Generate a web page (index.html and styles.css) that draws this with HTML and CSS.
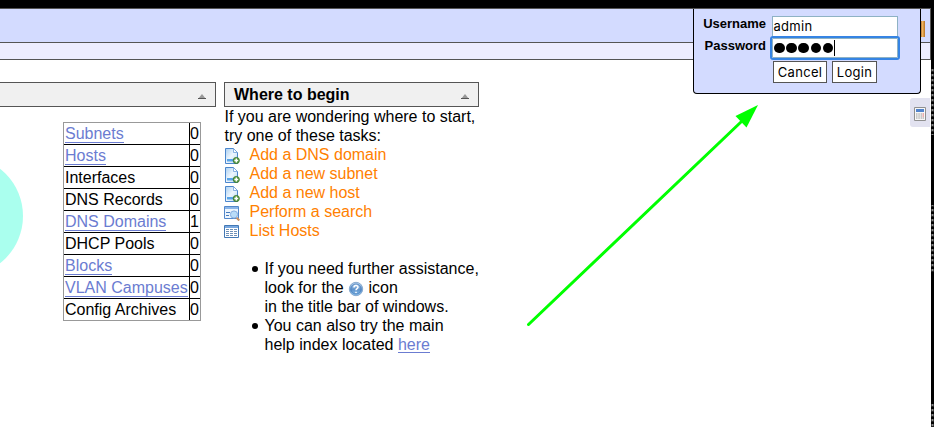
FILE: index.html
```
<!DOCTYPE html>
<html lang="en">
<head>
<meta charset="utf-8">
<title>Desktop</title>
<link rel="stylesheet" href="styles.css">
</head>
<body>
<svg class="defs" width="0" height="0">
  <defs>
    <linearGradient id="sheet" x1="0" y1="0" x2="1" y2="1"><stop offset="0" stop-color="#a9cff2"/><stop offset=".5" stop-color="#eef6fd"/><stop offset="1" stop-color="#b5d6f6"/></linearGradient>
    <linearGradient id="ball" x1="0" y1="0" x2="0" y2="1"><stop offset="0" stop-color="#bcd6f0"/><stop offset=".55" stop-color="#5f93cc"/><stop offset="1" stop-color="#8ec4ef"/></linearGradient>
    <symbol id="page-add" viewBox="0 0 16 16">
      <path d="M1.500 .5h8l4 4v11h-12z" fill="url(#sheet)" stroke="#4b86cc"/>
      <path d="M9.500 .5v4h4z" fill="#fff" stroke="#6ea0da" stroke-width=".8"/>
      <path d="M3 11h7v2.500H3z" fill="#58a4e8"/>
      <circle cx="12.300" cy="12.500" r="3.100" fill="#5d9c45" stroke="#37752b" stroke-width=".8"/>
      <path d="M12.300 10.600v3.800M10.400 12.500h3.800" stroke="#fff" stroke-width="1.400"/>
    </symbol>
    <symbol id="search" viewBox="0 0 16 16">
      <path d="M.5 1.500h14v12H.5z" fill="#edf5fd" stroke="#5388cb"/>
      <path d="M1 2h13v2H1z" fill="#8ab5e8"/>
      <path d="M2 7.500h4M2 10.500h3" stroke="#457bbd" stroke-width="1.200"/>
      <path d="m12.300 12.500 3 3" stroke="#c78e61" stroke-width="2"/>
      <circle cx="10" cy="9.500" r="3.600" fill="#b9dcf8" stroke="#87aee0"/>
    </symbol>
    <symbol id="list" viewBox="0 0 16 16">
      <path d="M.5 1.500h14v12H.5z" fill="#fff" stroke="#4278b5"/>
      <path d="M1 2h13v2H1z" fill="#79a8df"/>
      <path d="M2 5.500h11M2 7.500h11M2 9.500h11M2 11.500h11" stroke="#6d90b8" stroke-dasharray="3 1 3 1"/>
    </symbol>
    <symbol id="help" viewBox="0 0 16 16">
      <circle cx="8" cy="8" r="6.700" fill="url(#ball)" stroke="#8aabd0"/>
      <circle cx="8" cy="8" r="5" fill="none" stroke="#4f82bd" stroke-width=".8"/>
      <path d="M6 6.500c0-2.600 4-2.500 4-.2C10 7.800 8 7.500 8 9.300M8 10.700v1.400" fill="none" stroke="#fff" stroke-width="1.500"/>
    </symbol>
    <symbol id="collapse" viewBox="0 0 8 6">
      <path d="M0 5 4 0l4 5z" fill="#999"/><path d="M0 4.500h8" stroke="#555"/>
    </symbol>
    <pattern id="weave" width="3" height="5" patternUnits="userSpaceOnUse">
      <path d="M0 1h3v2H0z" fill="#444"/><path d="M1 1h1v2H1z" fill="#888"/><path d="M0 3h3v1H0z" fill="#222"/>
    </pattern>
  </defs>
</svg>
<div class="desktop">
  <div class="topbar"><span class="door"></span></div>
  <div class="taskbar"></div>
  <main class="windows">
    <section class="summary">
      <h2 class="title"><svg class="tri"><use href="#collapse"/></svg></h2>
      <div class="summary-body">
        <div class="chart"></div>
        <table class="counts">
          <tr><td><a>Subnets</a></td><td>0</td></tr>
          <tr><td><a>Hosts</a></td><td>0</td></tr>
          <tr><td>Interfaces</td><td>0</td></tr>
          <tr><td>DNS Records</td><td>0</td></tr>
          <tr><td><a>DNS Domains</a></td><td>1</td></tr>
          <tr><td>DHCP Pools</td><td>0</td></tr>
          <tr><td><a>Blocks</a></td><td>0</td></tr>
          <tr><td><a>VLAN Campuses</a></td><td>0</td></tr>
          <tr><td>Config Archives</td><td>0</td></tr>
        </table>
      </div>
    </section>
    <section class="begin">
      <h2 class="title">Where to begin<svg class="tri"><use href="#collapse"/></svg></h2>
      <div class="begin-body">
        <p>If you are wondering where to start,<br>try one of these tasks:</p>
        <div class="task"><svg><use href="#page-add"/></svg>Add a DNS domain</div>
        <div class="task"><svg><use href="#page-add"/></svg>Add a new subnet</div>
        <div class="task"><svg><use href="#page-add"/></svg>Add a new host</div>
        <div class="task"><svg><use href="#search"/></svg>Perform a search</div>
        <div class="task"><svg><use href="#list"/></svg>List Hosts</div>
        <ul>
          <li><span class="dot"></span><div>If you need further assistance,<br>look for the <svg class="help"><use href="#help"/></svg> icon<br>in the title bar of windows.</div></li>
          <li><span class="dot"></span><div>You can also try the main<br>help index located <a>here</a></div></li>
        </ul>
      </div>
    </section>
  </main>
</div>
<svg class="edge" width="3" height="359"><path d="M0 0h3v67H0zM0 137h3v68H0zM0 335h3v24H0z" fill="url(#weave)"/></svg>
<form class="login">
  <label>Username</label><div class="field">admin</div>
  <label>Password</label><div class="field focus"><i></i><i></i><i></i><i></i><i></i><b></b></div>
  <div class="buttons"><span class="btn">Cancel</span><span class="btn">Login</span></div>
</form>
<div class="calc"><svg width="12" height="14" viewBox="0 0 12 14"><path d="M.5 .5h11v13H.5z" fill="#f7f7f7" stroke="#909090"/><path d="M2 2h8v3H2z" fill="#5283cb"/><path d="M2 7h6M2 9h6M2 11h6" stroke="#999" stroke-dasharray="1.500 .8"/><path d="M8.500 7H10M8.500 9H10" stroke="#d66"/><path d="M8.500 11H10" stroke="#999"/></svg></div>
<svg class="arrow" width="234" height="224" viewBox="0 0 234 224"><path d="M3.500 219.500 216 17" stroke="#0f0" stroke-width="3" stroke-linecap="round"/><path d="m233 0-22.500 11 11 11.500z" fill="#0f0"/></svg>
</body>
</html>
```
FILE: styles.css
```
* { box-sizing: border-box; }
body { margin: 0; width: 934px; height: 427px; overflow: hidden; position: relative; background: #000; font: 16px/19px "Liberation Sans", Arial, sans-serif; color: #000; padding-top: 8px; }
.defs { position: absolute; }
.desktop { width: 931px; height: 419px; background: #fff; }
.topbar { height: 35px; background: #d3dbff; border: solid #555; border-width: 1px 1px 1px 0; display: flex; justify-content: flex-end; padding: 12px 5px 0 0; }
.door { width: 5px; height: 16px; background: linear-gradient(90deg, #94501a, #efb45e 50%, #b77225); }
.taskbar { height: 17px; background: #ededff; border: solid #555; border-width: 0 1px 1px 0; }
.windows { display: flex; gap: 8px; padding-top: 22px; }
.summary { width: 216px; }
.begin { width: 255px; }
.title { margin: 0; height: 25px; font-size: 16px; line-height: 23px; border: 1px solid #555; background: #f0f0f0; padding: 0 9px; display: flex; justify-content: space-between; }
.summary .title { border-left: 0; justify-content: flex-end; }
.tri { width: 8px; height: 6px; margin-top: 11px; }
.summary-body { display: flex; padding-top: 15px; }
.chart { width: 63px; height: 198px; overflow: hidden; display: flex; align-items: center; }
.chart::before { content: ""; flex: none; width: 120px; height: 120px; margin: -11px 0 0 -97px; border-radius: 50%; background: #afe; }
.counts { border-collapse: separate; border-spacing: 0; border: 1px solid #999; width: 138px; height: 199px; line-height: 19px; }
.counts td { padding: 1px 0 1px 1px; height: 22px; border-bottom: 1px solid #000; white-space: nowrap; }
.counts td:first-child { width: 125px; }
.counts td + td { border-left: 1px solid #000; padding-left: 0; width: 11px; }
.counts tr:last-child td { border-bottom: 0; height: 21px; }
a { color: #6b7cd1; border-bottom: 1px solid #6b7cd1; }
.counts a { display: inline-block; line-height: 17px; }
.begin-body { padding-left: .5px; }
p { margin: 0; white-space: nowrap; }
.task { display: flex; height: 19px; color: #ff8000; }
.task svg { width: 16px; height: 16px; margin: 3px 9.500px 0 -.5px; }
.begin a { display: inline-block; height: 18px; line-height: 19px; vertical-align: top; }
ul { margin: 19px 0 0; padding-left: 27px; white-space: nowrap; list-style: none; }
li { height: 57px; display: flex; }
li + li { height: 38px; }
.dot { width: 6px; height: 6px; border-radius: 50%; background: #000; margin: 7px 7px 0 0; }
.help { width: 16px; height: 16px; vertical-align: -4px; margin: -6px 0 0; }
.edge { position: absolute; left: 931px; top: 68px; }
.login { position: absolute; left: 693px; top: 9px; width: 228px; height: 85px; background: #d3dbff; border: 1px solid #000; border-top: 0; border-radius: 0 0 4px 4px; display: grid; grid-template-columns: 72px 128px; grid-template-rows: 21px 21px auto; column-gap: 5px; padding-top: 7px; }
.login label { text-align: right; font: bold 13px/16px "Liberation Sans", sans-serif; }
.login label:nth-of-type(2) { padding-top: 1px; }
.field { margin-left: 1px; width: 126px; height: 21px; border: 1px solid #8eb2c4; background: #fff; font: 13px/19px Inter, sans-serif; letter-spacing: .3px; padding-left: .5px; }
.field.focus { height: 20px; margin-top: 1px; outline: 2px solid #3584e4; border-radius: 1px; display: flex; align-items: center; gap: 1.700px; padding-left: 1px; }
.field i { width: 10.500px; height: 10.500px; border-radius: 50%; background: #000; }
.field b { width: 1px; height: 16px; background: #000; margin-left: -1px; }
.buttons { grid-column: 2; display: flex; gap: 5px; padding: 3px 0 0 2px; }
.btn { height: 22px; width: 54px; border: 1px solid #555; background: #fff; font: 13px/21px Inter, sans-serif; letter-spacing: .3px; text-align: center; }
.btn + .btn { width: 45px; }
.calc { position: absolute; left: 910px; top: 98px; width: 20px; height: 29px; background: #e2e2f0; border-radius: 3px 0 0 3px; display: flex; align-items: center; padding: 3px 0 0 4px; }
.arrow { position: absolute; left: 525px; top: 105px; }
```
